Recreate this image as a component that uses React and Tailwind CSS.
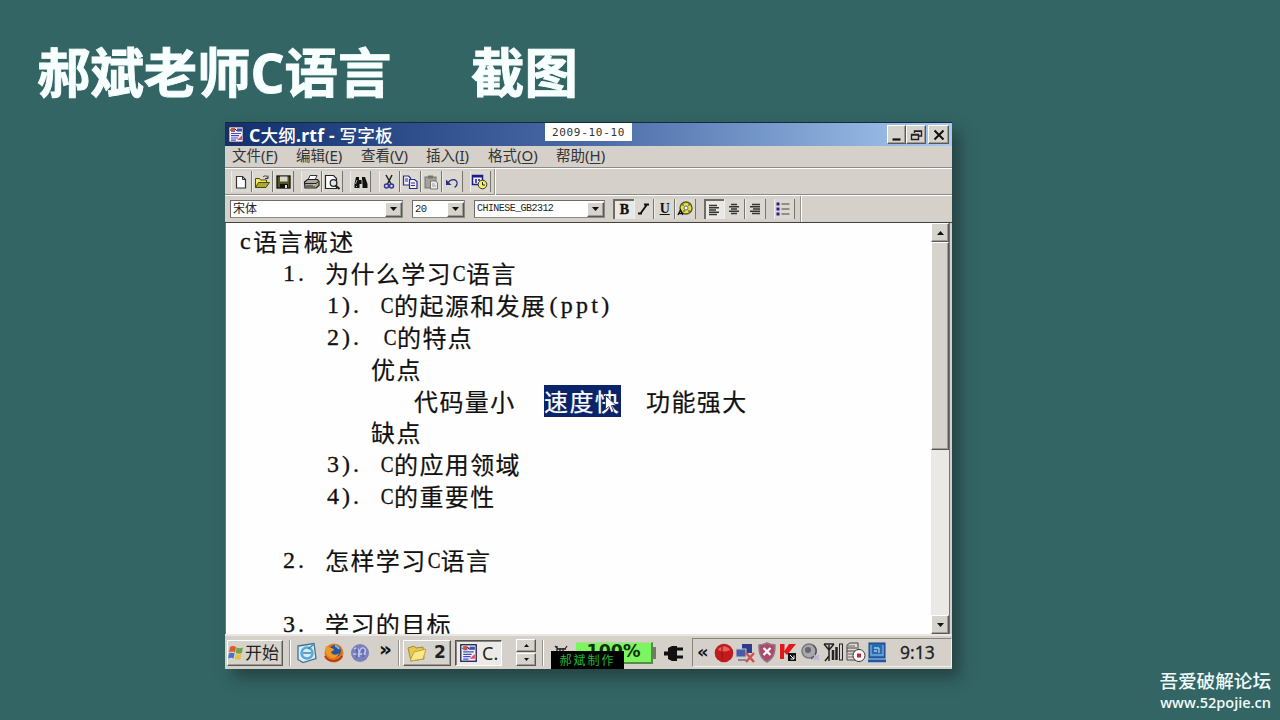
import React from "react";

const UI = "font-['Noto_Sans','Noto_Sans_CJK_SC',sans-serif]";
const RAISED =
  "border border-t-white border-l-white border-r-[#5a5854] border-b-[#5a5854] bg-[#d6d3cc] shadow-[inset_-1px_-1px_0_#a09c96]";

function Icon({ w = 18, h = 18, children, className = "" }) {
  return (
    <svg width={w} height={h} viewBox={`0 0 ${w} ${h}`} className={`shrink-0 ${className}`} fill="none">
      {children}
    </svg>
  );
}

const DocIcon = ({ s = 16 }) => (
  <svg width={s} height={s + 1} viewBox="0 0 16 17" className="shrink-0">
    <rect x="0.7" y="0.7" width="14.6" height="15.6" fill="#f2f0fa" stroke="#28284e" strokeWidth="1.3" />
    <rect x="3" y="2" width="4" height="4" fill="#b85a50" />
    <rect x="9" y="2.5" width="5" height="3" fill="#4050b0" />
    <path d="M3 7.5h10M3 9.7h8M3 12h7M3 14.2h5" stroke="#3c4ec8" strokeWidth="1.2" />
    <path d="M9 14l5-4.5v4.5z" fill="#e84860" />
    <path d="M2 4h1M7 3l2 2" stroke="#222" />
  </svg>
);

const toolIcons = {
  new: (
    <>
      <path d="M4.500 3.500h6l3 3v8.500h-9z" fill="#fff" stroke="#333" strokeWidth="1.2" />
      <path d="M10.500 3.500v3h3" stroke="#333" />
    </>
  ),
  open: (
    <>
      <path d="M2.500 14.500v-9h4l1 1.500h6v3" fill="#f0ea60" stroke="#4a4a10" />
      <path d="M2.500 14.500l3-5h11l-3.500 5z" fill="#b0a830" stroke="#4a4a10" />
      <path d="M10 4c2-2 4-1 5 1m0-2.500v3h-3" stroke="#333" />
    </>
  ),
  save: (
    <>
      <rect x="3" y="3" width="13" height="12" fill="#55551e" stroke="#111" strokeWidth="1.3" />
      <rect x="6" y="3.500" width="7.500" height="5" fill="#d8d6cf" />
      <rect x="6" y="11" width="8" height="4" fill="#111" />
      <rect x="11" y="12" width="2" height="3" fill="#ddd" />
    </>
  ),
  print: (
    <>
      <path d="M6 7l2-4.500h7L13 7" fill="#fff" stroke="#333" />
      <path d="M2.500 9l3-2.500h10l1.500 2v4l-3 2.500h-11z" fill="#aaa89f" stroke="#222" strokeWidth="1.200" />
      <path d="M3 10.500h11l2.500-2M4 13h9" stroke="#222" />
      <path d="M11 12h2" stroke="#e0dc20" strokeWidth="1.500" />
    </>
  ),
  preview: (
    <>
      <path d="M2.500 2.500h8l3 3v10h-11z" fill="#fff" stroke="#222" strokeWidth="1.200" />
      <circle cx="10.500" cy="10" r="3.300" fill="#dfe7e7" stroke="#222" strokeWidth="1.200" />
      <path d="M12.500 12.500l4 3.500" stroke="#222" strokeWidth="2.200" />
    </>
  ),
  find: (
    <>
      <path d="M5 4h3v3h3V4h3l2.500 7v4h-5v-4h-3v4h-5v-4z" fill="#111" />
      <path d="M6 7l-1.500 4M11 7v4M5 13.500h1" stroke="#aaa" />
    </>
  ),
  cut: (
    <>
      <path d="M6 2l5 9M12 2L7.500 11" stroke="#222" strokeWidth="1.500" />
      <circle cx="6.500" cy="13" r="2" stroke="#3434a0" strokeWidth="1.500" />
      <circle cx="11.500" cy="13" r="2" stroke="#3434a0" strokeWidth="1.500" />
    </>
  ),
  copy: (
    <>
      <path d="M2.500 3h5l2 2v7h-7z" fill="#f0f0ff" stroke="#2c2c80" strokeWidth="1.200" />
      <path d="M8.500 6.500h5l2.500 2v7h-7.500z" fill="#f0f0ff" stroke="#2c2c80" strokeWidth="1.200" />
      <path d="M4 6h3M4 8h3M10 10h4M10 12.500h4" stroke="#2c2c80" />
    </>
  ),
  paste: (
    <>
      <rect x="3" y="4" width="11" height="11" fill="#a5a29b" stroke="#77746f" />
      <rect x="6" y="2.500" width="5" height="3" fill="#77746f" />
      <path d="M8.500 8h5l2 2v6h-7z" fill="#eee" stroke="#77746f" />
      <path d="M10 11h3M10 13h4" stroke="#999" />
    </>
  ),
  undo: (
    <>
      <path d="M5 10c3-5 10-4 9 1-.5 2-1.500 3-2.500 3" stroke="#30307c" strokeWidth="1.300" />
      <path d="M3 6.500v5.500h5.500z" fill="#30307c" />
    </>
  ),
  date: (
    <>
      <rect x="1.500" y="2.500" width="10" height="9" fill="#eef" stroke="#1c1c90" strokeWidth="1.500" />
      <path d="M1 3.500h11" stroke="#1c1c90" strokeWidth="2" />
      <path d="M4 7h2M7 7h2M4 9h2" stroke="#1c1c90" strokeWidth="1.500" />
      <circle cx="11.500" cy="11.500" r="4.300" fill="#f4f060" stroke="#333" />
      <path d="M11.500 9v3h2.500" stroke="#222" />
    </>
  ),
};

function Tool({ name }) {
  return (
    <div className="flex h-[21px] w-[21px] items-center justify-start border-l border-r border-l-[#efede8] border-r-[#77746f] bg-[#dbd8d2]">
      <Icon>{toolIcons[name]}</Icon>
    </div>
  );
}

function ToolGroup({ names }) {
  return (
    <div className="flex">
      {names.map((n) => (
        <Tool key={n} name={n} />
      ))}
    </div>
  );
}

function FormatButton({ pressed, children }) {
  const look = pressed
    ? "border-l-2 border-t-2 border-l-[#6e6b67] border-t-[#6e6b67] bg-[#eae8e4]"
    : "border-l border-r border-l-[#f1efeb] border-r-[#77746f] bg-[#dbd8d2]";
  return <div className={`flex h-[20px] w-[20.700px] items-center justify-center ${look}`}>{children}</div>;
}

const Arrow = ({ up }) => (
  <svg width="7" height="4" viewBox="0 0 7 4">
    <path d={up ? "M0 4h7L3.500 0z" : "M0 0h7L3.500 4z"} fill="#111" />
  </svg>
);

function Combo({ className, children }) {
  return (
    <div
      className={`flex h-[18px] items-center justify-between border border-t-[#6e6b67] border-l-[#6e6b67] border-r-[#8d8a85] border-b-[#8d8a85] bg-white pl-[2px] ${className}`}
    >
      <span className="whitespace-nowrap leading-none text-[#222]">{children}</span>
      <span className={`flex h-[15px] w-[17px] items-center justify-center ${RAISED}`}>
        <Arrow />
      </span>
    </div>
  );
}

function Menu({ className, label, hotkey }) {
  return (
    <span className={`whitespace-nowrap ${className}`}>
      {label}
      <span className="text-[15px]">
        (<span className="underline underline-offset-2">{hotkey}</span>)
      </span>
    </span>
  );
}

/* Outline text: Cn = Chinese run, En = half-width run, C = the narrow capital. */
const Cn = ({ children, className = "pb-[2px]" }) => (
  <span className={`tracking-[1.400px] [-webkit-text-stroke:0.200px] ${className}`}>{children}</span>
);
const En = ({ w, children }) => (
  <span className={`inline-block whitespace-nowrap font-['Liberation_Serif',serif] [-webkit-text-stroke:0.300px_#111] ${w}`}>
    {children}
  </span>
);
const C = () => (
  <span className="inline-block w-[14px] origin-left scale-x-[0.800] pl-px font-['Liberation_Serif',serif] [-webkit-text-stroke:0.300px_#111]">
    C
  </span>
);
const Line = ({ indent = "", children }) => (
  <div className={`flex h-[31.850px] items-center whitespace-nowrap leading-[31px] ${indent}`}>{children}</div>
);

const Groove = ({ className = "" }) => (
  <div className={`h-[26px] w-[2px] border-l border-r border-l-[#96938d] border-r-white ${className}`} />
);

export default function App() {
  return (
    <div className="relative h-[720px] w-[1280px] overflow-hidden bg-[#336565]">
      <h1 className="flex h-[122px] items-start pl-[37px] pt-[35px] font-['Open_Sans','Noto_Sans_CJK_SC',sans-serif] text-[53.400px] font-bold leading-[76px] text-[#f8ffff] [-webkit-text-stroke:0.900px_#f8ffff]">
        <span className="w-[434px] whitespace-nowrap">郝斌老师C语言</span>
        <span className="whitespace-nowrap">截图</span>
      </h1>

      <div className="relative ml-[225px] flex h-[547px] w-[727px] flex-col border-t border-[#18283a] bg-[#d5d1ca] shadow-[8px_9px_14px_rgba(30,45,45,0.600)]">
        {/* title bar */}
        <div className="flex h-[23px] shrink-0 items-center bg-linear-to-r from-[#12306f] via-[#4a6aa6] via-50% to-[#a6caf0] pl-[3px] pr-[3px]">
          <DocIcon s={16} />
          <div className="ml-[5px] w-[296px] whitespace-nowrap font-['Noto_Sans','Noto_Sans_CJK_SC',sans-serif] text-[17.600px] font-bold leading-[22px] tracking-[0.200px] text-white">
            C<span className="font-medium">大纲</span>.rtf - <span className="font-medium">写字板</span>
          </div>
          <div className="mb-[5px] flex h-[18px] w-[87px] items-center justify-center bg-white font-['DejaVu_Sans_Mono',monospace] text-[11px] leading-none tracking-[0.700px] text-[#333]">
            2009-10-10
          </div>
          <div className="ml-auto flex">
            <div className={`flex h-[19px] w-[19px] items-center justify-center ${RAISED}`}>
              <Icon w={14} h={14}>
                <path d="M2.500 11.500h8" stroke="#111" strokeWidth="2.200" />
              </Icon>
            </div>
            <div className={`flex h-[19px] w-[20px] items-center justify-center ${RAISED}`}>
              <Icon w={14} h={14}>
                <path d="M5.500 5V3h7v5h-2.500M5 3.200h8M2.500 6.500h7v5h-7zM2 7h8" stroke="#222" strokeWidth="1.400" />
              </Icon>
            </div>
            <div className={`ml-[2px] flex h-[19px] w-[21px] items-center justify-center ${RAISED}`}>
              <Icon w={14} h={14}>
                <path d="M2.500 2.500l9 9M11.500 2.500l-9 9" stroke="#111" strokeWidth="2" />
              </Icon>
            </div>
          </div>
        </div>

        {/* menus */}
        <div className={`flex h-[22px] shrink-0 items-center border-b border-[#8d8a85] pb-[2px] pl-[7px] text-[14.500px] leading-none text-[#333] ${UI}`}>
          <Menu className="w-[64px]" label="文件" hotkey="F" />
          <Menu className="w-[65px]" label="编辑" hotkey="E" />
          <Menu className="w-[65px]" label="查看" hotkey="V" />
          <Menu className="w-[62px]" label="插入" hotkey="I" />
          <Menu className="w-[68px]" label="格式" hotkey="O" />
          <Menu className="" label="帮助" hotkey="H" />
        </div>

        {/* standard toolbar */}
        <div className="flex h-[27px] shrink-0 items-center border-t border-b border-t-white border-b-[#8d8a85] pl-[6px]">
          <div className="flex gap-[7.200px]">
            <ToolGroup names={["new", "open", "save"]} />
            <ToolGroup names={["print", "preview"]} />
            <ToolGroup names={["find"]} />
            <ToolGroup names={["cut", "copy", "paste", "undo"]} />
            <ToolGroup names={["date"]} />
          </div>
          <Groove className="ml-[3px]" />
        </div>

        {/* format bar */}
        <div className="flex h-[28px] shrink-0 items-center border-t border-b border-t-white border-b-[#44423f] pl-[5px]">
          <Combo className={`mr-[9px] w-[173px] text-[12px] ${UI}`}>宋体</Combo>
          <Combo className="mr-[9px] w-[53px] font-['Liberation_Mono',monospace] text-[10.500px] tracking-[-0.500px]">20</Combo>
          <Combo className="mr-[8px] w-[131px] font-['Liberation_Mono',monospace] text-[10px] tracking-[-0.550px]">CHINESE_GB2312</Combo>
          <div className="flex font-['Liberation_Serif',serif] text-[14px] font-bold leading-none text-[#111]">
            <FormatButton pressed>
              <span className="[-webkit-text-stroke:0.400px_#111]">B</span>
            </FormatButton>
            <FormatButton>
              <Icon w={16} h={16}>
                <path d="M2 12.500h4M8 3.500h5M4.500 12.500L11 3.500" stroke="#111" strokeWidth="1.900" />
              </Icon>
            </FormatButton>
            <FormatButton>
              <span className="underline underline-offset-1">U</span>
            </FormatButton>
            <FormatButton>
              <Icon>
                <circle cx="10" cy="8" r="6" fill="#e4dc48" stroke="#55551c" strokeWidth="1.300" />
                <circle cx="10" cy="8" r="2" fill="#fff" stroke="#666" />
                <path d="M7 4v2M13 4v2M7 11h2M13 10v2" stroke="#774" strokeWidth="1.500" />
                <path d="M2 15l2.500-5 2.500 5M3 13.500h3" stroke="#111" strokeWidth="1.300" />
              </Icon>
            </FormatButton>
          </div>
          <div className="ml-[8px] flex">
            <FormatButton pressed>
              <Icon w={14} h={14}>
                <path d="M1 2.500h8M1 4.700h10M1 7h7M1 9.200h10M1 11.500h8" stroke="#333" strokeWidth="1.400" />
              </Icon>
            </FormatButton>
            <FormatButton>
              <Icon w={14} h={14}>
                <path d="M3 2.500h6M1 4.700h10M3 7h6M1 9.200h10M3 11.500h6" stroke="#333" strokeWidth="1.400" />
              </Icon>
            </FormatButton>
            <FormatButton>
              <Icon w={14} h={14}>
                <path d="M4 2.500h8M2 4.700h10M5 7h7M2 9.200h10M4 11.500h8" stroke="#333" strokeWidth="1.400" />
              </Icon>
            </FormatButton>
          </div>
          <div className="ml-[8px] flex">
            <FormatButton>
              <Icon w={16} h={16}>
                <path d="M0.500 3h3M0.500 8h3M0.500 13h3" stroke="#2c1c90" strokeWidth="3" />
                <path d="M5.500 3h8M5.500 8h8M5.500 13h8" stroke="#444" strokeWidth="1.200" />
              </Icon>
            </FormatButton>
          </div>
          <Groove className="ml-[5px]" />
        </div>

        {/* document */}
        <div className="flex h-[411px] shrink-0 overflow-hidden border-l border-[#777]">
          <div className="min-w-0 flex-1 overflow-hidden bg-[#fefefe] pl-[14px] pt-[3px] font-['Noto_Sans_CJK_SC',sans-serif] text-[24px] text-[#111]">
            <Line>
              <En w="w-[13px]">c</En>
              <Cn>语言概述</Cn>
            </Line>
            <Line indent="pl-[43px]">
              <En w="w-[42px] tracking-[3px]">1.</En>
              <Cn>为什么学习</Cn>
              <C />
              <Cn>语言</Cn>
            </Line>
            <Line indent="pl-[87px]">
              <En w="w-[53px] tracking-[3px]">1).</En>
              <C />
              <Cn>的起源和发展</Cn>
              <En w="w-[68px] pl-[3px] tracking-[3.300px]">(ppt)</En>
            </Line>
            <Line indent="pl-[87px]">
              <En w="w-[56px] tracking-[3px]">2).</En>
              <C />
              <Cn>的特点</Cn>
            </Line>
            <Line indent="pl-[131px]">
              <Cn>优点</Cn>
            </Line>
            <Line indent="pl-[174px]">
              <Cn className="w-[130px] pb-[2px]">代码量小</Cn>
              <Cn className="relative mr-[25px] h-[32px] w-[77px] bg-[#0a246a] leading-[31px] text-white">
                速度快
                <svg width="12" height="19" viewBox="0 0 12 19" className="absolute left-[61px] top-[10px]">
                  <path d="M0.500 0.500v14l3.300-3 2.500 6 2.600-1-2.600-6h5z" fill="#fff" stroke="#0a246a" strokeWidth="0.800" />
                </svg>
              </Cn>
              <Cn>功能强大</Cn>
            </Line>
            <Line indent="pl-[131px]">
              <Cn>缺点</Cn>
            </Line>
            <Line indent="pl-[87px]">
              <En w="w-[53px] tracking-[3px]">3).</En>
              <C />
              <Cn>的应用领域</Cn>
            </Line>
            <Line indent="pl-[87px]">
              <En w="w-[53px] tracking-[3px]">4).</En>
              <C />
              <Cn>的重要性</Cn>
            </Line>
            <Line />
            <Line indent="pl-[43px]">
              <En w="w-[42px] tracking-[3px]">2.</En>
              <Cn>怎样学习</Cn>
              <C />
              <Cn>语言</Cn>
            </Line>
            <Line />
            <Line indent="pl-[43px]">
              <En w="w-[42px] tracking-[3px]">3.</En>
              <Cn>学习的目标</Cn>
            </Line>
          </div>
          <div className="mr-[2px] flex w-[19px] flex-col border-r border-[#77746f] bg-[#ebe9e6]">
            <div className={`flex h-[19px] items-center justify-center ${RAISED}`}>
              <Arrow up />
            </div>
            <div className={`h-[208px] ${RAISED}`} />
            <div className={`mt-auto flex h-[19px] items-center justify-center ${RAISED}`}>
              <Arrow />
            </div>
          </div>
        </div>

        {/* taskbar */}
        <div className={`flex flex-1 items-center border-t-2 border-[#e9e7e3] pl-[2px] text-[#222] ${UI}`}>
          <div className={`flex h-[26px] w-[56px] items-center ${RAISED}`}>
            <Icon w={17} h={18}>
              <path d="M2 3c2-1.500 4-1.500 6 0l-1 5.500c-2-1.500-4-1-6 0z" fill="#d85a30" />
              <path d="M8.500 3.500c2 1 4 1 6.500 0l-1.200 5.500c-2 1-4 1-6 0z" fill="#70a840" />
              <path d="M1 9.500c2-1.200 4-1 5.500 0l-1 5c-1.500-1-3.500-1-5.500 0z" fill="#4474c8" />
              <path d="M7.500 10c2 1 4 1 6 0l-1 5c-2 1-4 1-6 0z" fill="#e8c040" />
            </Icon>
            <span className="whitespace-nowrap text-[17px] leading-none">开始</span>
          </div>
          <Groove className="ml-[6px]" />
          <Icon w={22} h={22} className="ml-[5px]">
            <path d="M2 4l16-2.500 2 15-13 4-5-3z" fill="#d6eef8" stroke="#446e8c" strokeWidth="1.300" />
            <circle cx="11" cy="11" r="5.500" stroke="#58a8d8" strokeWidth="2.500" />
            <path d="M7 11h8M12 7l5-4" stroke="#3a80b0" strokeWidth="1.500" />
          </Icon>
          <Icon w={22} h={22} className="ml-[5px]">
            <circle cx="11" cy="11" r="9.500" fill="#e07820" />
            <circle cx="12" cy="9" r="6" fill="#28549c" />
            <path d="M3 4c2 0 3 1 5 2 2 0 3 1 3 2l-3 2c1 3 5 4 8 1-1 5-8 7-12 2C2 10 2 7 3 4z" fill="#f09828" />
            <path d="M2 14c3 6 13 7 17 0" stroke="#b83c18" strokeWidth="2" />
            <path d="M12 4c2 0 3 1 4 3" stroke="#88b8e0" strokeWidth="2" />
          </Icon>
          <Icon w={22} h={22} className="ml-[4px]">
            <circle cx="11" cy="11" r="9" fill="#7c80ba" />
            <path d="M5 7c4-3 6 1 4 8M10 15c0-8 3-11 6-8 2 4-3 6-6 5M4 12h13" stroke="#c0c4ec" strokeWidth="1.300" />
            <path d="M8 5v11M14 7v8" stroke="#4c5498" />
          </Icon>
          <span className="mb-[7px] ml-[8px] w-[14px] font-['DejaVu_Sans',sans-serif] text-[20px] font-bold leading-none text-[#111]">»</span>
          <Groove className="ml-[5px]" />
          <div className={`ml-[3px] flex h-[26px] w-[48px] items-center pl-[3px] ${RAISED}`}>
            <Icon w={20} h={20}>
              <path d="M1 5l6-2 2 2 7-1 1 12-13 2z" fill="#e8c850" stroke="#a88830" />
              <path d="M3 18l4-9 12-3-3 10z" fill="#f8e888" stroke="#c0a040" />
            </Icon>
            <span className="ml-[7px] font-['DejaVu_Sans',sans-serif] text-[17px] font-bold leading-none">2</span>
          </div>
          <div className="ml-[4px] flex h-[26px] w-[47px] items-center border border-t-[#55534f] border-l-[#55534f] border-r-white border-b-white bg-[#eceae6] pl-[4px] shadow-[inset_1px_1px_0_#88857f]">
            <DocIcon s={17} />
            <span className="ml-[5px] text-[18px] leading-none">C.</span>
          </div>
          <div className="ml-[14px] flex flex-col gap-[1px]">
            <div className={`flex h-[13px] w-[20px] items-center justify-center ${RAISED}`}>
              <svg width="5" height="3" viewBox="0 0 5 3">
                <path d="M0 3h5L2.500 0z" fill="#111" />
              </svg>
            </div>
            <div className={`flex h-[13px] w-[20px] items-center justify-center ${RAISED}`}>
              <svg width="5" height="3" viewBox="0 0 5 3">
                <path d="M0 0h5L2.500 3z" fill="#111" />
              </svg>
            </div>
          </div>
          <Groove className="ml-[6px]" />
          <Icon w={16} h={20} className="ml-[10px]">
            <path d="M1 3l3 3h8M3 3v6M6 5v3M9 5v4M13 3l-2 3M2 9h10" stroke="#222" strokeWidth="1.300" />
          </Icon>
          <div className="ml-[6px] flex h-[22px] w-[77px] items-center justify-center border-t border-b-2 border-r-2 border-t-[#b5d8a0] border-b-[#5a8a4a] border-r-[#5a8a4a] bg-[#7cf560] font-['DejaVu_Sans',sans-serif] text-[17.500px] font-bold leading-none text-[#123010]">
            100%
          </div>
          <div className="h-[12px] w-[3px] bg-[#77746f]" />
          <Icon w={22} h={20} className="ml-[7px]">
            <path d="M1 8.500h4V5l4-2h5v15H9l-4-2v-3.500H1z" fill="#111" />
            <path d="M14 6h6M14 14h6" stroke="#111" strokeWidth="3" />
          </Icon>
          <div className="ml-[7px] flex h-[29px] flex-1 items-center border border-t-[#88857f] border-l-[#88857f] border-r-[#f2f0ec] border-b-[#f2f0ec] pl-[4px]">
            <span className="mb-px w-[16px] font-['DejaVu_Sans',sans-serif] text-[18px] font-bold leading-none text-[#111]">«</span>
            <Icon w={20} h={20} className="ml-[1px]">
              <circle cx="10" cy="10" r="9.300" fill="#c01c1c" />
              <path d="M4 7c3-5 9-5 12 0-4 2-8 2-12 0z" fill="#e86058" />
              <path d="M8 3v14" stroke="#a01414" strokeWidth="1.200" />
            </Icon>
            <Icon w={22} h={20} className="ml-[1px]">
              <rect x="7" y="1" width="10" height="9" fill="#303c88" />
              <rect x="1" y="6" width="10" height="8" fill="#4c5ca4" stroke="#c0c4d8" />
              <path d="M3 17h8" stroke="#888" strokeWidth="2" />
              <path d="M11 10l8 9M19 10l-8 9" stroke="#d05050" strokeWidth="2.500" />
            </Icon>
            <Icon w={20} h={21}>
              <path d="M2 3c4 0 6-1 8-2 2 1 4 2 8 2 0 8-1 13-8 17C3 16 2 11 2 3z" fill="#b04868" stroke="#8c7888" strokeWidth="1.500" />
              <path d="M6.500 6l7 7M13.500 6l-7 7" stroke="#fff" strokeWidth="2.300" />
            </Icon>
            <Icon w={20} h={20} className="ml-[2px]">
              <path d="M1 1h4.500v7L10 1h7L8 12 5 9v7H1z" fill="#e01818" />
              <rect x="9" y="10" width="8" height="8" fill="#111" />
              <path d="M11 12l4 4m0-3.500V16h-3.500" stroke="#fff" />
            </Icon>
            <Icon w={21} h={21} className="ml-[1px]">
              <circle cx="9" cy="9" r="7" fill="#a9a9ad" stroke="#77777c" strokeWidth="1.500" />
              <circle cx="8" cy="8" r="3" fill="#66666c" />
              <path d="M13 3c5 4 4 10-2 14" stroke="#55555a" strokeWidth="1.500" />
              <path d="M14 13l5 5m0-5l-5 5" stroke="#b8b4dc" strokeWidth="2" />
            </Icon>
            <Icon w={21} h={21} className="ml-[2px]">
              <path d="M1 2l5 6 5-6M6 3v16M1 2h10M2 19l4-5" stroke="#222" strokeWidth="1.500" />
              <path d="M10 18V8M13.500 18V5" stroke="#222" strokeWidth="2.500" />
              <rect x="16.500" y="2" width="3" height="16" stroke="#222" />
            </Icon>
            <Icon w={22} h={21} className="ml-[1px]">
              <path d="M2 3l3-2h8v8H2zM2 6h10M2 9v9h9" fill="#dddbd5" stroke="#444" />
              <path d="M3 4h7M3 12h5M3 15h5" stroke="#666" />
              <circle cx="14" cy="13.500" r="6" fill="#fff" stroke="#333" />
              <rect x="12" y="11.500" width="4" height="4" fill="#c02838" />
            </Icon>
            <Icon w={20} h={21}>
              <rect x="2" y="1" width="16" height="15" fill="#2c68b0" stroke="#194480" />
              <path d="M4 3v10h12V3M1 17.500h18" stroke="#78acd8" strokeWidth="1.300" />
              <path d="M1 19h18" stroke="#1c58a8" strokeWidth="2.500" />
              <path d="M7 6h5M7 9h3M12 6v5" stroke="#9ad0f0" strokeWidth="1.300" />
            </Icon>
            <span className="ml-[13px] whitespace-nowrap text-[17.500px] leading-none [-webkit-text-stroke:0.300px_#222]">9:13</span>
          </div>
        </div>

        <div className="absolute bottom-0 left-[326px] flex h-[18px] w-[73px] items-center justify-center bg-black font-['Noto_Sans_CJK_SC',sans-serif] text-[12px] leading-none tracking-[2px] text-[#22b838]">
          郝斌制作
        </div>
      </div>

      <div className="absolute bottom-[7px] right-[9px] flex flex-col items-end whitespace-nowrap text-[#f0faf8]">
        <span className="mb-px font-['Noto_Sans_CJK_SC',sans-serif] text-[18.600px] font-medium leading-[24px]">吾爱破解论坛</span>
        <span className="font-['Open_Sans',sans-serif] text-[14.500px] font-semibold leading-[20px]">www.52pojie.cn</span>
      </div>
    </div>
  );
}
